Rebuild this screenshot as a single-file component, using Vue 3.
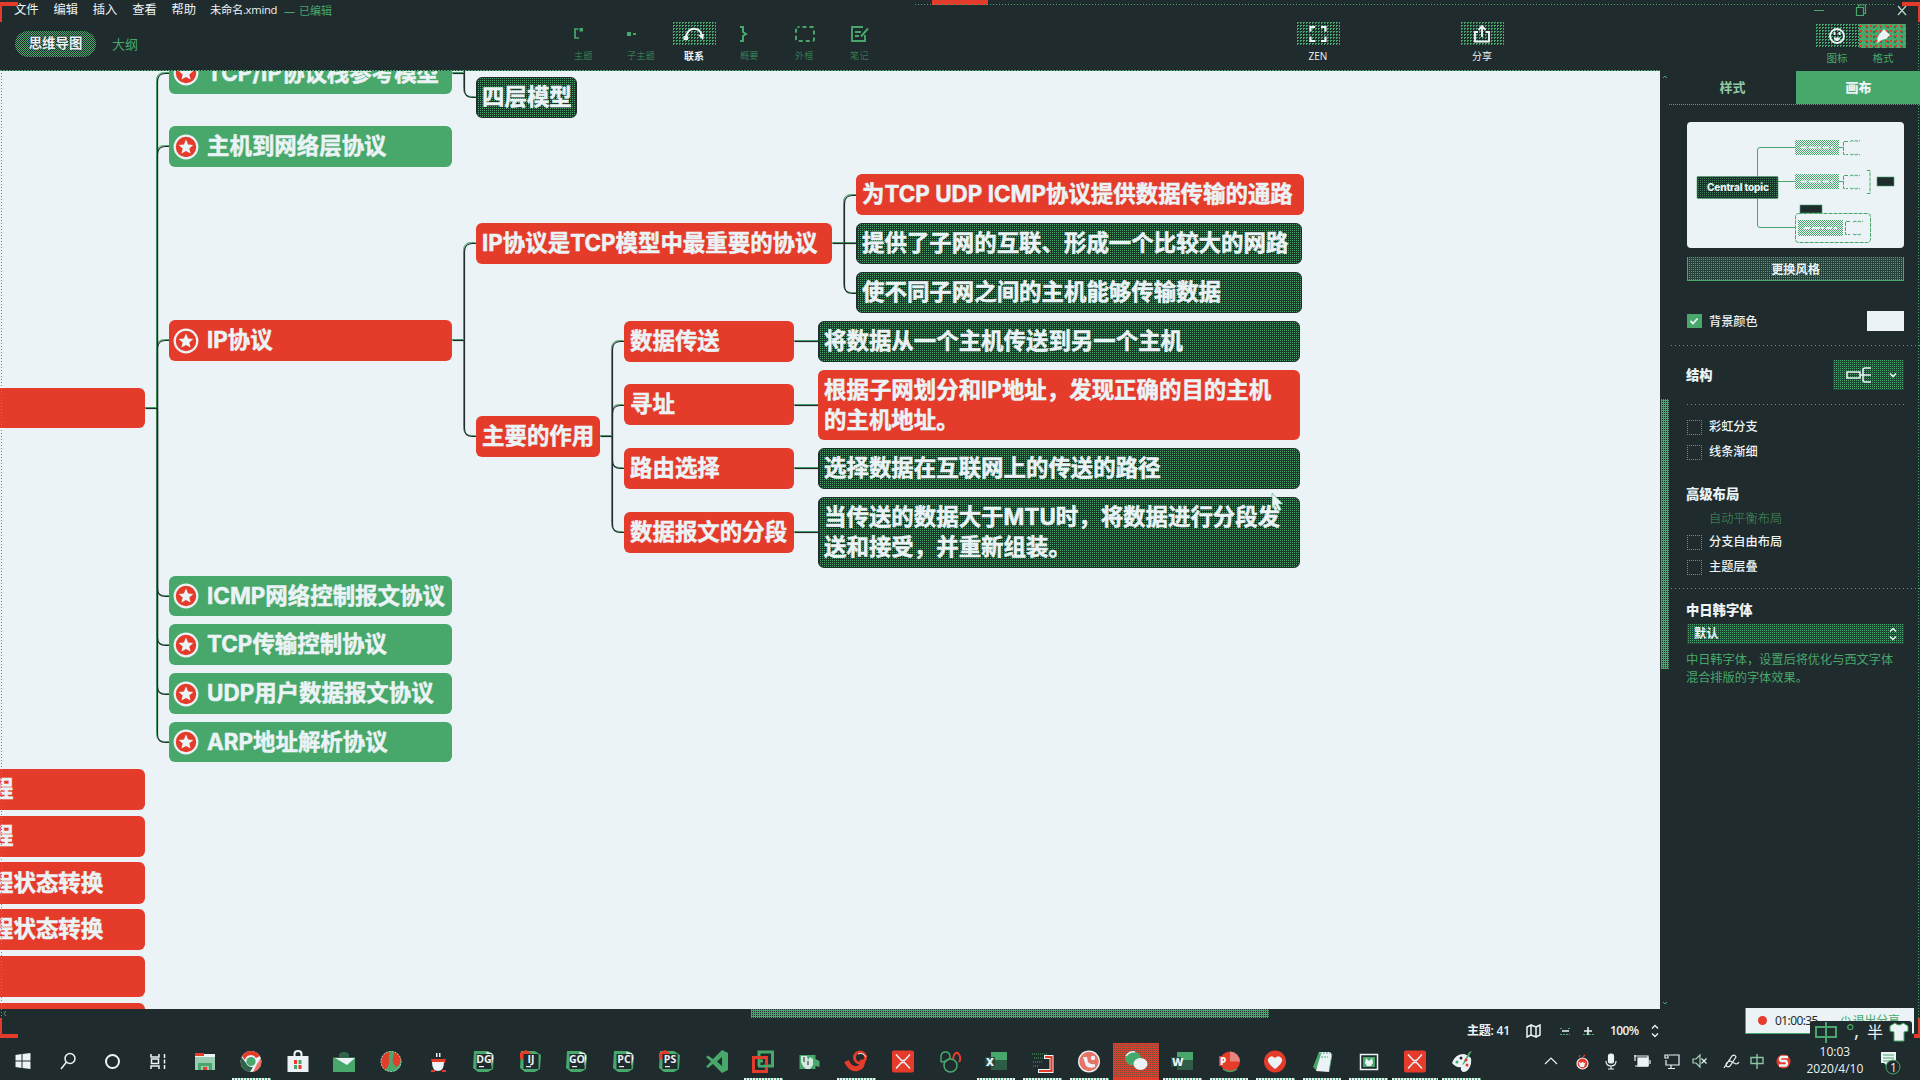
<script setup>
const menus = ['文件', '编辑', '插入', '查看', '帮助']

const nodes = [
  { t: 'TCP/IP协议栈参考模型', x: 169, y: 52, w: 283, h: 42, c: 'green', star: true },
  { t: '主机到网络层协议', x: 169, y: 126, w: 283, h: 41, c: 'green', star: true },
  { t: 'IP协议', x: 169, y: 320, w: 283, h: 41, c: 'red', star: true },
  { t: 'ICMP网络控制报文协议', x: 169, y: 576, w: 283, h: 40, c: 'green', star: true },
  { t: 'TCP传输控制协议', x: 169, y: 624, w: 283, h: 41, c: 'green', star: true },
  { t: 'UDP用户数据报文协议', x: 169, y: 673, w: 283, h: 41, c: 'green', star: true },
  { t: 'ARP地址解析协议', x: 169, y: 722, w: 283, h: 40, c: 'green', star: true },
  { t: '四层模型', x: 476, y: 77, w: 101, h: 41, c: 'dark' },
  { t: 'IP协议是TCP模型中最重要的协议', x: 476, y: 223, w: 356, h: 41, c: 'red' },
  { t: '主要的作用', x: 476, y: 416, w: 124, h: 41, c: 'red' },
  { t: '为TCP UDP ICMP协议提供数据传输的通路', x: 856, y: 174, w: 448, h: 41, c: 'red' },
  { t: '提供了子网的互联、形成一个比较大的网路', x: 856, y: 223, w: 446, h: 41, c: 'dark' },
  { t: '使不同子网之间的主机能够传输数据', x: 856, y: 272, w: 446, h: 41, c: 'dark' },
  { t: '数据传送', x: 624, y: 321, w: 170, h: 41, c: 'red' },
  { t: '寻址', x: 624, y: 384, w: 170, h: 41, c: 'red' },
  { t: '路由选择', x: 624, y: 448, w: 170, h: 41, c: 'red' },
  { t: '数据报文的分段', x: 624, y: 512, w: 170, h: 41, c: 'red' },
  { t: '将数据从一个主机传送到另一个主机', x: 818, y: 321, w: 482, h: 41, c: 'dark' },
  { t: '根据子网划分和IP地址，发现正确的目的主机\n的主机地址。', x: 818, y: 370, w: 482, h: 70, c: 'red' },
  { t: '选择数据在互联网上的传送的路径', x: 818, y: 448, w: 482, h: 41, c: 'dark' },
  { t: '当传送的数据大于MTU时，将数据进行分段发\n送和接受，并重新组装。', x: 818, y: 497, w: 482, h: 71, c: 'dark' },
  { t: '', x: -15, y: 388, w: 160, h: 40, c: 'red' },
  { t: '程', x: -15, y: 769, w: 160, h: 41, c: 'red' },
  { t: '程', x: -15, y: 816, w: 160, h: 41, c: 'red' },
  { t: '程状态转换', x: -15, y: 862, w: 160, h: 42, c: 'red' },
  { t: '程状态转换', x: -15, y: 909, w: 160, h: 41, c: 'red' },
  { t: '', x: -15, y: 956, w: 160, h: 41, c: 'red' },
  { t: '', x: -15, y: 1003, w: 160, h: 41, c: 'red' },
]

// Each entry: trunk x, child edge x, and the vertical centres of the children
const forks = [
  { from: [145, 408], x: 157, to: 170, ys: [73, 146, 340, 596, 645, 694, 742] },
  { from: [452, 73], x: 464, to: 476, ys: [60, 97] },
  { from: [452, 340], x: 464, to: 476, ys: [243, 436] },
  { from: [832, 243], x: 844, to: 857, ys: [195, 243, 293] },
  { from: [600, 436], x: 612, to: 624, ys: [341, 405, 468, 532] },
]
const links = []
for (const f of forks) {
  links.push(`M${f.from[0]} ${f.from[1]}H${f.x}`)
  for (const y of f.ys) {
    const d = y - f.from[1]
    if (Math.abs(d) < 8) links.push(`M${f.x} ${y}H${f.to}`)
    else {
      const s = Math.sign(d)
      links.push(`M${f.x} ${f.from[1]}V${y - 8 * s}Q${f.x} ${y} ${f.x + 8} ${y}H${f.to}`)
    }
  }
}
for (const y of [341, 405, 468, 532]) links.push(`M794 ${y}H819`)

const structureOptions = ['彩虹分支', '线条渐细']

const apps = [
  { k: 'win', w: 45.4 }, { k: 'search', w: 45.4 }, { k: 'cortana', w: 45.4 }, { k: 'task', w: 45.4 },
  { k: 'files' }, { k: 'chrome', run: 1 }, { k: 'store' }, { k: 'mail' }, { k: 'globe' }, { k: 'cup' },
  { k: 'jb', t: 'DG' }, { k: 'jb', t: 'IJ', hot: 1 }, { k: 'jb', t: 'GO' }, { k: 'jb', t: 'PC' }, { k: 'jb', t: 'PS', hot: 1 },
  { k: 'vs' }, { k: 'vm', run: 1 }, { k: 'cam' }, { k: 'bird', run: 1 }, { k: 'xmind' }, { k: 'rings' },
  { k: 'office', t: 'X', run: 1 }, { k: 'bracket', run: 1 }, { k: 'face', run: 1 }, { k: 'wechat', run: 2 },
  { k: 'office', t: 'W', run: 1 }, { k: 'ppt', run: 1 }, { k: 'heart', run: 1 }, { k: 'note', run: 1 },
  { k: 'photo', run: 1 }, { k: 'xmind', run: 3 }, { k: 'paint', run: 1 },
]
</script>

<template>
  <div class="screen">
    <header class="top">
      <div class="menubar">
        <span v-for="m in menus" :key="m" class="menu">{{ m }}</span>
        <span class="doc">未命名.xmind</span>
        <span class="edited"><i>—</i>已编辑</span>
        <div class="winctl">
          <svg width="96" height="14" viewBox="0 0 96 14" fill="none" stroke="#48a86b" stroke-width="1.2">
            <path d="M0 7.5h10M42.500 4.500h7v8h-7zM44.500 4v-2h7v8.500h-2" />
            <path d="M84 3l8 9M92 3l-8 9" stroke="#b9dcc8" />
          </svg>
        </div>
      </div>
      <div class="bar">
        <div class="modes">
          <span class="pill checker">思维导图</span>
          <span class="outline">大纲</span>
        </div>
        <div class="tools">
          <div class="tool" style="width: 53px">
            <div class="ic"><svg width="20" height="20" fill="none" stroke="#48a86b" stroke-width="1.700"><path d="M4.500 5H1v9h4" /><rect x="5.500" y="4" width="3.500" height="3.500" fill="#48a86b" stroke="none" /></svg></div>
            <span class="dim">主题</span>
          </div>
          <div class="tool" style="width: 45px">
            <div class="ic"><svg width="20" height="20" fill="#48a86b"><rect x="0" y="8" width="4" height="4" /><rect x="6" y="9" width="3" height="2" /></svg></div>
            <span class="dim">子主题</span>
          </div>
          <div class="tool" style="width: 68px">
            <div class="ic dots"><svg width="24" height="20" fill="none" stroke="#ebf3f6" stroke-width="2.200"><path d="M4 14C5 2 18 2 20 12" /><rect x="1.500" y="12" width="4.500" height="4" fill="#ebf3f6" stroke="none" /><path d="M16 11l5 5l1-6z" fill="#ebf3f6" stroke="none" /></svg></div>
            <span class="strong">联系</span>
          </div>
          <div class="tool" style="width: 55px">
            <div class="ic"><svg width="20" height="20" fill="none" stroke="#48a86b" stroke-width="2"><path d="M0 3h3v5l3 2l-3 2v5H0" /></svg></div>
            <span class="dim">概要</span>
          </div>
          <div class="tool" style="width: 55px">
            <div class="ic"><svg width="20" height="20" fill="none" stroke="#48a86b" stroke-width="2"><rect x="1" y="3" width="18" height="14" rx="1.500" stroke-dasharray="4 3" stroke-dashoffset="2" /></svg></div>
            <span class="dim">外框</span>
          </div>
          <div class="tool" style="width: 40px">
            <div class="ic"><svg width="20" height="20" fill="none" stroke="#48a86b" stroke-width="1.900"><path d="M13 3H2v14h13v-6M5 8h6M5 12h4M18 4.500l-7 8" /></svg></div>
            <span class="dim">笔记</span>
          </div>
        </div>
        <div class="tool zen">
          <div class="ic dots"><svg width="20" height="20" fill="none" stroke="#ebf3f6" stroke-width="2.200"><path d="M2.500 7.500V3h4.500M13 3h4.500v4.500M17.500 12.500V17H13M7 17H2.500v-4.500" /></svg></div>
          <span>ZEN</span>
        </div>
        <div class="tool share">
          <div class="ic dots"><svg width="20" height="20" fill="none" stroke="#ebf3f6" stroke-width="1.900"><path d="M6 8H3v9.500h14V8h-3M10 13V3M6.500 6L10 2.200L13.500 6" /></svg></div>
          <span>分享</span>
        </div>
        <div class="side">
          <div class="tool">
            <div class="ic dots"><svg width="20" height="20" fill="none" stroke="#ebf3f6" stroke-width="1.900"><circle cx="10" cy="10" r="7" /><path d="M6.500 11.500h7Q12.500 15 10 15T6.500 11.500z" fill="#ebf3f6" stroke="none" /><path d="M7.500 6v3M12.500 6v3" /></svg></div>
            <span class="g">图标</span>
          </div>
          <div class="tool">
            <div class="ic hot"><svg width="20" height="20" fill="#ebf3f6"><path d="M11 3l6 6l-4 4l-3 .500L7 15l-3.500 2.500L5 14l-1-1l2.500-5z" /></svg></div>
            <span class="g">格式</span>
          </div>
        </div>
      </div>
    </header>

    <main class="work">
      <section class="canvas">
        <svg class="links" width="1660" height="939" viewBox="0 70 1660 939" fill="none" stroke-width="1">
          <g stroke="#48a86b" transform="translate(-0.500 -0.500)"><path v-for="(l, i) in links" :key="i" :d="l" /></g>
          <g stroke="#1f2b2d" stroke-width="1.200" transform="translate(0.500 0.500)"><path v-for="(l, i) in links" :key="i" :d="l" /></g>
        </svg>
        <div
          v-for="(n, i) in nodes" :key="i" class="node" :class="[n.c, { starred: n.star }]"
          :style="{ left: n.x + 'px', top: n.y - 70 + 'px', width: n.w + 'px', height: n.h + 'px' }"
        >
          <svg v-if="n.star" class="star" width="26" height="26" viewBox="0 0 26 26">
            <circle cx="13" cy="13" r="11.300" fill="#e53b2a" stroke="#ebf3f6" stroke-width="2.200" />
            <path d="M13 5.600l2.100 4.900l5.200.400l-4 3.500l1.300 5.200L13 16.900l-4.600 2.700l1.300-5.200l-4-3.500l5.200-.400z" fill="#ebf3f6" />
          </svg>
          <span>{{ n.t }}</span>
        </div>
        <svg class="cursor" width="16" height="24" viewBox="0 0 16 24"><path d="M1 1v15l3.500-3l3 6l3-1.500l-3-5.500H12z" fill="#ebf3f6" stroke="#48a86b" stroke-width=".6" /></svg>
      </section>

      <div class="vscroll">
        <svg width="8" height="8" fill="none" stroke="#48a86b"><path d="M1 6l2-2l2 2" /></svg>
        <div class="vthumb"></div>
        <svg class="down" width="8" height="8" fill="none" stroke="#48a86b"><path d="M1 2l2 2l2-2" /></svg>
      </div>

      <aside class="panel">
        <div class="tabs"><span class="tab">样式</span><span class="tab on">画布</span></div>
        <div class="body">
          <svg class="preview" width="217" height="126" viewBox="1687 122 217 126">
            <defs>
              <pattern id="chk" width="2" height="2" patternUnits="userSpaceOnUse"><rect width="1" height="1" fill="#48a86b" /><rect x="1" y="1" width="1" height="1" fill="#48a86b" /></pattern>
              <pattern id="dot" width="2" height="2" patternUnits="userSpaceOnUse"><rect width="1" height="1" fill="#48a86b" /></pattern>
            </defs>
            <rect x="1687" y="122" width="217" height="126" rx="4" fill="#ebf3f6" />
            <path d="M1795 147.500h-35q-2.500 0-2.500 2.500v75q0 2.500 2.500 2.500h35M1757.500 181.500h37.500" fill="none" stroke="#48a86b" />
            <g fill="url(#chk)"><rect x="1795" y="140" width="44" height="15" /><rect x="1795" y="174" width="44" height="15" /><rect x="1798" y="220" width="45" height="16" /></g>
            <g stroke="#ebf3f6" stroke-width="2" stroke-dasharray="6 2 8 1 3 2"><path d="M1801 147.500h32M1801 181.500h32M1804 228h33" /></g>
            <g fill="none" stroke="#48a86b" stroke-dasharray="4 1">
              <path d="M1839 147.500h4M1848 141.500h-4.500v13h4.500M1839 181.500h4M1848 175.500h-4.500v13h4.500M1850 221.500h-4.500v13h4.500M1867 170.500h3v23h-3" />
              <rect x="1795.500" y="213.500" width="75" height="29" rx="3" />
              <path d="M1850 141.500l2-1l2 1l2-1l2 1l2-1M1850 154l2 1l2-1l2 1l2-1l2 1M1850 176l2-1l2 1l2-1l2 1l2-1M1850 188l2 1l2-1l2 1l2-1l2 1M1853 222l2-1l2 1l2-1l2 1l2-1M1853 234l2 1l2-1l2 1l2-1" />
            </g>
            <g fill="#1f2b2d" stroke="#48a86b" stroke-width=".6"><rect x="1697" y="176.500" width="81" height="22" rx="1" /><rect x="1800" y="205" width="22" height="8" /><rect x="1877" y="177" width="17" height="9" /></g>
            <rect x="1698" y="178" width="79" height="20" fill="url(#dot)" opacity=".7" />
            <text x="1738" y="191.200" text-anchor="middle" textLength="62" font-size="10" font-weight="800" fill="#ebf3f6" font-family="Inter, sans-serif">Central topic</text>
          </svg>
          <div class="change fill">更换风格</div>
          <div class="row bg">
            <span class="box checked"><svg width="14" height="14" fill="none" stroke="#ebf3f6" stroke-width="1.800"><path d="M3.500 7l2.500 2.500l4.500-5" /></svg></span>
            <span class="label">背景颜色</span><span class="swatch"></span>
          </div>
          <div class="rule wide"></div>
          <div class="row struct">
            <b>结构</b>
            <div class="pick fill">
              <svg width="60" height="20" fill="none" stroke="#ebf3f6" stroke-width="1.600"><path d="M2 7h13v6H2zM15 10h11M26 3h-6q-2 0-2 2v10q0 2 2 2h6" /><path d="M45 8.500l3 3l3-3" /></svg>
            </div>
          </div>
          <div class="rule"></div>
          <div class="opts first">
            <div v-for="o in structureOptions" :key="o" class="opt"><span class="box"></span>{{ o }}</div>
          </div>
          <b class="head">高级布局</b>
          <div class="opts second">
            <div class="opt off">自动平衡布局</div>
            <div class="opt"><span class="box"></span>分支自由布局</div>
            <div class="opt"><span class="box"></span>主题层叠</div>
          </div>
          <div class="rule wide"></div>
          <b class="head font">中日韩字体</b>
          <div class="select fill">默认
            <svg width="10" height="16" fill="none" stroke="#ebf3f6" stroke-width="1.500"><path d="M2 5.500l3-3l3 3M2 10.500l3 3l3-3" /></svg>
          </div>
          <p class="hint">中日韩字体，设置后将优化与西文字体<br />混合排版的字体效果。</p>
        </div>
      </aside>
    </main>

    <div class="hscroll"><svg width="14" height="9" fill="none" stroke="#48a86b"><path d="M6 2L4 4.500L6 7" /></svg><div class="hthumb"></div></div>

    <div class="status">
      <span class="count">主题: 41</span>
      <svg class="map" width="16" height="14" fill="none" stroke="#ebf3f6" stroke-width="1.500"><path d="M1 3l4-2v10l-4 2zM5 1l5 2v10l-5-2M10 3l4-2v10l-4 2" /></svg>
      <svg class="pm" width="36" height="14" fill="none"><path d="M1 4.500h3M9 4.500h3M1 10.500h10M24 10.500h11" stroke="#48a86b" stroke-dasharray="2 1" /><path d="M3 7h7M25 7h8M29 3v8" stroke="#ebf3f6" stroke-width="1.600" /></svg>
      <span class="zoom">100%</span>
      <svg width="10" height="14" fill="none" stroke="#ebf3f6" stroke-width="1.400"><path d="M2 4.500l3-3l3 3M2 9.500l3 3l3-3" /></svg>
    </div>

    <footer class="taskbar">
      <div class="apps">
        <div v-for="(a, i) in apps" :key="i" class="app" :class="{ active: a.run === 2 }" :style="{ width: (a.w || 46.55) + 'px' }">
          <svg width="24" height="24" viewBox="0 0 24 24" fill="none" stroke="#ebf3f6" stroke-width="1.500">
            <g v-if="a.k === 'win'" fill="#ebf3f6" stroke="none"><path d="M4.500 6l6-1v6.500h-6zM11.500 5l8-1v7.500h-8zM4.500 12.500h6V19l-6-1zM11.500 12.500h8V20l-8-1z" /></g>
            <g v-else-if="a.k === 'search'"><circle cx="14" cy="9.500" r="5" /><path d="M10.500 13L5 20" /></g>
            <circle v-else-if="a.k === 'cortana'" cx="11.500" cy="12.500" r="6.500" stroke-width="2" />
            <g v-else-if="a.k === 'task'"><path d="M4 5v3h8V5M4 20v-3h8v3M4.500 10h7v4.500h-7z" /><path d="M17.500 5v15" stroke-dasharray="4 1.500" /></g>
            <g v-else-if="a.k === 'files'" stroke="none"><rect x="2" y="5" width="20" height="16" fill="#ebf3f6" /><path d="M2 4h9v3H2z" fill="#e53b2a" /><path d="M2 8h20v13H2z" fill="#48a86b" opacity=".5" /><path d="M5 14h14v7h-3v-4H8v4H5z" fill="#48a86b" /><path d="M10 18h4v3h-4z" fill="#e53b2a" /></g>
            <g v-else-if="a.k === 'chrome'" stroke="none"><circle cx="12" cy="12.500" r="10.500" fill="#ebf3f6" /><path d="M3 7a10.500 10.500 0 0 1 18 0l-4 2a6 6 0 0 0-11 2z" fill="#e53b2a" /><path d="M2.500 8A10.500 10.500 0 0 0 11 23l3-5a6 6 0 0 1-7-4z" fill="#2f6249" /><path d="M22 9a10.500 10.500 0 0 1-8 14l4-8z" fill="#e53b2a" opacity=".7" /><circle cx="12" cy="12.500" r="4.600" fill="#48a86b" /></g>
            <g v-else-if="a.k === 'store'"><path d="M8.500 7V5q0-3 3.500-3t3.500 3v2" stroke-width="2" /><path d="M1.500 7h21v16h-21z" fill="#ebf3f6" stroke="none" /><path d="M8 11h3v4H8zM12.500 16h3v4h-3z" fill="#e53b2a" stroke="none" /><path d="M12.500 11h3v4h-3zM8 16h3v4H8z" fill="#48a86b" stroke="none" /></g>
            <g v-else-if="a.k === 'mail'" stroke="none"><path d="M7 8V5l3-2h4l3 2v3z" fill="#2f6249" /><path d="M1 8.500h22V23H1z" fill="#48a86b" /><path d="M3 9h20L15 16z" fill="#ebf3f6" /></g>
            <g v-else-if="a.k === 'globe'" stroke="none"><circle cx="12" cy="12.500" r="10.500" fill="#48a86b" /><path d="M11 2.500A10.500 10.500 0 0 0 6 21q5-5 4-9t1-9.500zM15 3q5 2 7 7-1 6-5 8-5-6-3-9z" fill="#e53b2a" /><circle cx="12" cy="12.500" r="10" stroke="#ebf3f6" stroke-width="1" stroke-dasharray="1 2" /></g>
            <g v-else-if="a.k === 'cup'" stroke="none"><path d="M10 4h1.500v4H10zM13 4h1.500v4H13z" fill="#ebf3f6" /><path d="M5 10h15l-1 4q-7 2-13 0z" fill="#e53b2a" /><path d="M6 13h12q0 9-6 9t-6-9z" fill="#ebf3f6" /><path d="M5 21h4v2H5zM16 21h4v2h-4z" fill="#e53b2a" /></g>
            <g v-else-if="a.k === 'jb'" stroke="none"><path d="M2 2h14l6 4-1 14-5 3H6l-5-4z" fill="#48a86b" /><path v-if="a.hot" d="M1 4l6-3 5 3-6 7-5-1z" fill="#e53b2a" /><path v-else d="M14 3l6 1 1.500 5-2 8z" fill="#ebf3f6" /><rect x="4.500" y="5" width="15" height="15" fill="#1f2b2d" /><text x="12" y="14" text-anchor="middle" font-size="10.500" font-weight="700" fill="#ebf3f6" font-family="Open Sans, sans-serif">{{ a.t }}</text><path d="M7 17h5v1.200H7z" fill="#ebf3f6" /></g>
            <g v-else-if="a.k === 'vs'" stroke="none"><path d="M17 1l6 3v17l-6 3L8 15l-5 4-2-1.500L6 12.500 1 8l2-1.500L8 10zM17 8l-5 4.500 5 4.500z" fill="#48a86b" fill-rule="evenodd" /></g>
            <g v-else-if="a.k === 'vm'" stroke-width="3"><path d="M8 12V3h13.500v14h-9M8 17v-5h4" stroke="#48a86b" /><rect x="2.500" y="8.500" width="13" height="14" stroke="#e53b2a" /><path d="M8 14.500v3h6M19 17H8" stroke="#48a86b" stroke-width="2" /></g>
            <g v-else-if="a.k === 'cam'" stroke="none"><path d="M1.500 6h16v4l4 2v6l-4-1v3h-16z" fill="#48a86b" /><path d="M3 7h6l1 4 2-3 3 2v6l-3 4H8l-3-3-2-4z" fill="#ebf3f6" opacity=".85" /><path d="M6 8v5M10 12v4" stroke="#1f2b2d" stroke-width="1" /></g>
            <g v-else-if="a.k === 'bird'"><path d="M2.500 12q4 9 11 7.500q6-2 5-9" stroke="#e53b2a" stroke-width="5" /><circle cx="16" cy="8.500" r="5.500" stroke="#e53b2a" stroke-width="3" /><path d="M14 5q5-2 8 3" stroke-width="1" /></g>
            <g v-else-if="a.k === 'xmind'"><rect x="1" y="1.500" width="22" height="22" rx="2" fill="#e53b2a" stroke="none" /><path d="M5 5.500l5.500 6h3l5.500-6M5 19.500l5.500-6h3l5.500 6" stroke-width="1.500" /></g>
            <g v-else-if="a.k === 'rings'" stroke="#48a86b"><circle cx="12.500" cy="16.500" r="6.500" /><path d="M3 13V8q0-5 4.500-5T12 8v2M3 13q5 0 9-4" /><path d="M15 10q1-7 5-6q4 5 1 9" stroke="#e53b2a" stroke-width="2" /></g>
            <g v-else-if="a.k === 'office'" stroke="none"><rect x="7" y="3" width="16" height="8" fill="#48a86b" /><path d="M7 11h16v10H7z" fill="#48a86b" opacity=".4" /><rect x="1" y="8" width="10" height="10" fill="#22493a" /><text x="2" y="17" font-size="11" font-weight="800" fill="#ebf3f6" font-family="Open Sans, sans-serif">{{ a.t }}</text></g>
            <g v-else-if="a.k === 'bracket'"><path d="M1 5h16M3 9h9M2 13h10M2 17h6" stroke="#48a86b" stroke-width="1" stroke-dasharray="1 1" /><path d="M13 8h7.500v14H7" stroke-width="4" /><path d="M14 8h6.500v14H8" stroke="#e53b2a" stroke-width="2.200" /></g>
            <g v-else-if="a.k === 'face'" stroke="none"><circle cx="12" cy="12.500" r="11" fill="#ebf3f6" /><circle cx="12" cy="12.500" r="9.700" fill="#e53b2a" opacity=".7" /><path d="M6 8h4l1 5q3 3 7 2v3q-5 2-9-1z" fill="#ebf3f6" /><circle cx="16" cy="9" r="2.200" fill="#ebf3f6" /></g>
            <g v-else-if="a.k === 'wechat'" stroke="none"><ellipse cx="9" cy="9.500" rx="8" ry="7" fill="#48a86b" /><path d="M2 7q4-5 9-4" stroke="#ebf3f6" /><ellipse cx="16.500" cy="15" rx="7" ry="6" fill="#ebf3f6" /></g>
            <g v-else-if="a.k === 'ppt'" stroke="none"><circle cx="13" cy="12.500" r="10" fill="#e53b2a" /><path d="M13 2.500a10 10 0 0 1 10 10H13z" fill="#ebf3f6" opacity=".4" /><rect x="2" y="7" width="9" height="10" fill="#e53b2a" /><text x="3" y="15.500" font-size="10" font-weight="800" fill="#ebf3f6" font-family="Open Sans, sans-serif">P</text><path d="M6 20q7 5 14 0" stroke="#48a86b" /></g>
            <g v-else-if="a.k === 'heart'" stroke="none"><circle cx="12" cy="12.500" r="11" fill="#e53b2a" /><path d="M12 20Q4 14 5 10q3-5 7-1 4-4 7 1 1 4-7 10z" fill="#ebf3f6" /></g>
            <g v-else-if="a.k === 'note'" stroke="none"><path d="M9 3h11l2 3-3 17-13-1z" fill="#ebf3f6" /><path d="M9 3L3 18l3 3L11 5z" fill="#48a86b" /><path d="M20 3l2 2-3 18M10 4h10M8 8h10" stroke="#48a86b" stroke-width="1" stroke-dasharray="2 1" /></g>
            <g v-else-if="a.k === 'photo'"><rect x="3.500" y="5.500" width="17" height="15" /><rect x="6" y="8" width="12" height="10" fill="#48a86b" stroke="none" /><path d="M9 9l3 3l3-3l1 5l-2 3h-4l-2-3z" fill="#ebf3f6" stroke="none" /></g>
            <g v-else stroke="none"><path d="M2 14Q5 5 14 5q9 2 7 10-3 9-8 8-3-2-2-5-5 1-9-4z" fill="#ebf3f6" /><path d="M19 3l3-1-8 13-2 1z" fill="#48a86b" /><circle cx="7" cy="13" r="1.500" fill="#48a86b" /><circle cx="11" cy="9" r="1.500" fill="#1f2b2d" /><circle cx="17" cy="16" r="1.500" fill="#e53b2a" /><circle cx="16" cy="11" r="1.500" fill="#e53b2a" /></g>
          </svg>
          <i v-if="a.run" class="run" :class="'r' + a.run"></i>
        </div>
      </div>
      <div class="tray">
        <svg width="256" height="20" viewBox="0 0 256 20" fill="none" stroke="#ebf3f6" stroke-width="1.200">
          <path d="M5 13l6-6l6 6" />
          <circle cx="42.500" cy="12.500" r="5.500" fill="#e53b2a" /><path d="M38.500 11h7l-1.500 5h-4z" fill="#ebf3f6" stroke="none" /><path d="M40 11.500h1.500M43.500 11.500h1.500M39 6l1-2M43 6l2-2" stroke="#e53b2a" />
          <rect x="68.500" y="3" width="5" height="9" rx="2" fill="#ebf3f6" /><path d="M66 10q0 5 5 5t5-5M71 15v3M68 18h6" />
          <rect x="98" y="7" width="10" height="8" fill="#ebf3f6" /><path d="M94 5h14v10M95 15h13M95 4v6" /><path d="M110 9v4" />
          <path d="M129 4h10v10h-13v-5M125 4h3v3h-3zM131 14v3M128 17.500h7" />
          <path d="M153 8h3l4-4v12l-4-4h-3z" stroke="#a9d4bb" /><path d="M161.500 7.500l5 5M166.500 7.500l-5 5" />
          <path d="M184 17l8-12q3-2 4 1l-6 9q-3 2-4-1q0-3 4-4l6 3q2 0 3-2" />
          <path d="M211 6.500h12v6h-12zM217 3v15" stroke="#8cc4a2" stroke-width="1.400" />
          <circle cx="243.500" cy="10.500" r="7" fill="#e53b2a" stroke="none" /><path d="M248 6h-7q-2 2 0 4h5q2 3 0 4.500h-7" stroke-width="2.400" />
        </svg>
        <div class="clock"><span>10:03</span><span>2020/4/10</span></div>
        <svg class="notice" width="26" height="26"><path d="M2 2h15v11H8v3l-3-3H2z" fill="#ebf3f6" /><path d="M4 5h11M4 8h11M4 11h7" stroke="#48a86b" /><circle cx="14" cy="17" r="7" fill="#1f2b2d" stroke="#48a86b" /><text x="11" y="21.500" font-size="12" fill="#ebf3f6" font-family="Open Sans, sans-serif">1</text></svg>
      </div>
    </footer>

    <div class="share-pill"><i></i><span class="timer">01:00:35</span><span class="exit">⏻ 退出分享</span></div>
    <div class="ime">
      <svg width="28" height="24" fill="none" stroke="#48a86b" stroke-width="2"><path d="M4 7h20v10H4zM14 2v21" /></svg>
      <span class="deg">°</span><span class="comma">,</span><span class="half">半</span>
      <svg width="20" height="22" fill="#ebf3f6"><path d="M1 5l5-3q4 4 8 0l5 3v5l-4 1v9H5v-9l-4-1z" stroke="#48a86b" /></svg>
    </div>

    <i class="corner tl"></i><i class="corner tr"></i><i class="corner bl"></i><i class="corner br"></i>
    <i class="grip"></i><i class="topline"></i><i class="leftline"></i><i class="rightline"></i>
  </div>
</template>

<style>
html, body { background: #1f2b2d; overflow: hidden; }
</style>

<style scoped>
.screen {
  --d: #1f2b2d; --g: #48a86b; --l: #ebf3f6; --r: #e53b2a;
  position: relative; width: 1920px; height: 1080px; overflow: hidden;
  display: flex; flex-direction: column;
  background: var(--d); color: var(--l);
  font-family: "Open Sans", "Noto Sans CJK SC", sans-serif; font-size: 12px; line-height: 1;
}
svg { display: block; flex: none; }
.checker { background: conic-gradient(var(--g) 25%, var(--d) 0 50%, var(--g) 0 75%, var(--d) 0) 0 0 / 2px 2px; }
.dots { background: conic-gradient(var(--g) 25%, var(--d) 0) 0 0 / 3px 3px; }
.fill { background: conic-gradient(var(--g) 25%, #24413a 0) 0 0 / 2px 2px; }

.top { height: 70px; flex: none; display: flex; flex-direction: column; }
.menubar { height: 20px; display: flex; align-items: center; padding-left: 14px; font-size: 12.300px; }
.menu { width: 39.400px; }
.doc { width: 74px; font-size: 11.300px; margin-left: -1px; white-space: nowrap; letter-spacing: -.3px; }
.edited { color: var(--g); font-size: 11px; }
.edited i { font-style: normal; margin-right: 4px; }
.winctl { margin-left: auto; margin-right: 10px; }
.bar { height: 50px; display: flex; align-items: flex-start; }
.modes { width: 559px; padding-left: 15px; padding-top: 11px; display: flex; align-items: center; box-sizing: border-box; }
.pill { width: 81px; height: 26px; border-radius: 13px; display: flex; align-items: center; justify-content: center; font-size: 13.400px; font-weight: 700; text-shadow: 0 0 1px var(--d), 0 0 2px var(--d); }
.outline { margin-left: 16px; font-size: 13px; color: var(--g); }
.tools { display: flex; padding-left: 15px; width: 737px; box-sizing: border-box; }
.tool { display: flex; flex-direction: column; font-size: 10px; padding-top: 2px; }
.tool .ic { height: 24px; display: flex; align-items: center; }
.tool .ic.dots, .tool .ic.hot { width: 44px; justify-content: center; }
.tool span { margin-top: 5px; height: 10px; white-space: nowrap; }
.tool .strong { font-weight: 700; }
.tool .ic.dots + span, .tool .ic.hot + span { width: 44px; text-align: center; }
.tool .dim { color: var(--g); font-size: 9.300px; opacity: .85; font-weight: 300; }
.tools .tool { flex: none; }
.zen { width: 164px; }
.share { width: 355px; }
.side { display: flex; padding-top: 2px; }
.side .tool .ic.hot { width: 47px; background: radial-gradient(circle at 2px 2px, var(--r) .8px, transparent 1px) 0 0 / 5px 5px, radial-gradient(circle at 1px 3px, var(--d) .6px, transparent .8px) 0 0 / 7px 5px, var(--g); }
.side .tool .ic.hot + span { width: 48px; }
.tool .g { color: var(--g); font-size: 10.500px; }

.work { height: 939px; flex: none; display: flex; }
.canvas { position: relative; width: 1660px; flex: none; background: var(--l); overflow: hidden; }
.canvas::before { content: ""; position: absolute; inset: 0 0 auto; height: 1px; background: repeating-linear-gradient(90deg, var(--g) 0 2px, var(--d) 2px 3px); z-index: 2; }
.links { position: absolute; left: 0; top: 0; }
.node {
  position: absolute; box-sizing: border-box; border-radius: 6px; display: flex; align-items: center; padding-left: 6px;
  font: 700 22.450px/30px Inter, "Noto Sans CJK SC", sans-serif; color: var(--l); white-space: pre;
}
.node span { -webkit-text-stroke: .5px var(--l); margin-top: -1px; }
.node.green { background: var(--g); }
.node.red { background: var(--r); }
.node.dark { background: conic-gradient(var(--g) 25%, #22332f 0) 0 0 / 2px 2px; border: 1px solid var(--d); padding-left: 5px; }
.node.starred { padding-left: 4px; gap: 8px; }
.cursor { position: absolute; left: 1271px; top: 422px; }

.vscroll { width: 9px; display: flex; flex-direction: column; padding: 2px 0 1px; box-sizing: border-box; }
.vscroll svg { margin-left: 2px; }
.vthumb { margin: 319px 0 0 1px; width: 8px; height: 270px; background: conic-gradient(var(--d) 25%, var(--g) 0) 0 0 / 2px 2px; }
.down { margin-top: auto; }

.panel { width: 251px; display: flex; flex-direction: column; }
.tabs { display: flex; height: 34px; border-top: 1px solid transparent; box-sizing: border-box; margin-left: -9px; }
.tab { width: 136px; height: 33px; display: flex; align-items: center; justify-content: center; font-size: 13px; font-weight: 600; color: #8fc9a6; padding-left: 9px; box-sizing: border-box; }
.tab.on { width: 124px; background: var(--g); color: var(--l); font-weight: 800; padding: 0 0 0 1px; }
.body { padding: 0 16px 0 18px; border-top: 1px dotted var(--g); display: flex; flex-direction: column; }
.preview { margin-top: 17px; }
.change { margin-top: 9px; height: 24px; box-sizing: border-box; border: 1px solid var(--g); border-top: 0; display: flex; align-items: center; justify-content: center; padding-top: 3px; font-size: 12.200px; font-weight: 600; }
.row { display: flex; align-items: center; }
.bg { margin-top: 30px; height: 20px; gap: 7px; font-size: 12.200px; font-weight: 500; }
.label { padding-top: 2px; }
.swatch { margin-left: auto; width: 37px; height: 20px; background: var(--l); }
.box { width: 15px; height: 15px; box-sizing: border-box; border: 1px dotted var(--g); flex: none; }
.box.checked { background: var(--g); border: 0; height: 14px; }
.rule { height: 1px; flex: none; background: repeating-linear-gradient(90deg, var(--g) 0 1px, transparent 1px 4px); }
.rule.wide { margin: 14px -16px 0 -16px; }
.struct { margin-top: 14px; height: 30px; justify-content: space-between; }
.struct b { padding-top: 2px; }
b { font-size: 13.300px; font-weight: 800; margin-left: -1px; }
.pick { width: 71px; height: 30px; display: flex; align-items: center; justify-content: flex-end; }
.pick svg { margin-right: -1px; }
.struct + .rule { margin-top: 14px; }
.opts { display: flex; flex-direction: column; font-size: 12.200px; font-weight: 500; }
.opt { height: 25px; display: flex; align-items: center; gap: 7px; }
.first { margin-top: 10px; }
.head { margin-top: 23px; height: 14px; }
.second { margin-top: 5px; }
.opt.off { height: 24px; padding-left: 22px; color: var(--g); opacity: .85; font-weight: 300; }
.second .opt + .opt { position: relative; top: -1px; }
.second + .rule.wide { margin-top: 7px; }
.head.font { margin-top: 15px; }
.select { margin-top: 6px; height: 20px; padding: 0 6px 0 7px; display: flex; align-items: center; justify-content: space-between; font-size: 12.200px; font-weight: 600; }
.hint { margin: 7px -8px 0 -1px; color: var(--g); font-size: 12.200px; line-height: 18px; white-space: nowrap; }

.hscroll { height: 9px; flex: none; display: flex; }
.hthumb { margin-left: 737px; width: 518px; height: 9px; background: conic-gradient(var(--d) 25%, var(--g) 0) 0 0 / 2px 2px; }
.status { height: 25px; flex: none; display: flex; align-items: center; padding-left: 1467px; font: 600 12px/1 "Open Sans", "Noto Sans CJK SC", sans-serif; }
.count { width: 59px; letter-spacing: -.2px; }
.map { width: 33px; }
.pm { width: 51px; }
.zoom { width: 40px; letter-spacing: -.6px; }

.taskbar { height: 37px; flex: none; display: flex; }
.apps { display: flex; }
.app { position: relative; height: 37px; display: flex; justify-content: center; padding-top: 6px; box-sizing: border-box; }
.app.active { background: conic-gradient(var(--r) 25%, #7c4a35 0 50%, var(--r) 0 75%, #7c6a45 0) 0 0 / 2px 2px; }
.run { position: absolute; bottom: 0; left: 4px; right: 4px; height: 2px; background: repeating-linear-gradient(90deg, var(--l) 0 2px, var(--g) 2px 3px); }
.run.r2 { left: 0; right: 0; height: 3px; background: var(--r); }
.run.r3 { left: 0; right: 0; }
.tray { display: flex; margin-left: 55px; padding-top: 8px; }
.clock { width: 72px; margin-left: 3px; display: flex; flex-direction: column; align-items: center; gap: 5px; font-size: 12px; margin-top: -5px; }
.notice { margin: -1px 0 0 8px; }

.share-pill { position: absolute; left: 1745px; top: 1008px; width: 169px; height: 26px; background: var(--l); border-bottom: 1px solid var(--g); border-left: 1px solid var(--g); box-sizing: border-box; display: flex; align-items: center; padding-left: 12px; color: var(--d); font-size: 12px; white-space: nowrap; }
.share-pill i { width: 9px; height: 9px; border-radius: 50%; background: var(--r); margin-right: 8px; }
.timer { width: 66px; font-family: "Noto Sans", sans-serif; letter-spacing: -.6px; }
.exit { color: var(--g); letter-spacing: -.2px; }
.ime { position: absolute; left: 1810px; top: 1021px; width: 102px; height: 22px; background: var(--d); border-radius: 3px; display: flex; align-items: center; padding-left: 2px; box-sizing: border-box; }
.deg { font-size: 20px; color: var(--g); width: 14px; padding-left: 6px; box-sizing: border-box; }
.comma { font-size: 20px; width: 13px; margin-top: -4px; }
.half { font-size: 16px; width: 22px; }

.corner { position: absolute; width: 18px; height: 20px; box-sizing: border-box; border: 0 solid var(--r); }
.tl { left: 0; top: 2px; border-width: 4px 0 0 2px; }
.tr { right: 0; top: 2px; border-width: 4px 2px 0 0; }
.bl { left: 0; top: 1018px; border-width: 0 0 4px 2px; }
.br { right: 0; top: 1018px; width: 6px; border-width: 0 2px 4px 0; }
.grip { position: absolute; left: 932px; top: 0; width: 56px; height: 5px; background: var(--r); }
.topline { position: absolute; left: 915px; top: 4px; width: 980px; height: 1px; background: repeating-linear-gradient(90deg, var(--g) 0 1px, transparent 1px 3px); z-index: 0; }
.leftline { position: absolute; left: 1px; top: 70px; width: 1px; height: 948px; background: repeating-linear-gradient(180deg, var(--g) 0 1px, transparent 1px 3px); }
.rightline { position: absolute; right: 1px; top: 24px; width: 1px; height: 994px; background: repeating-linear-gradient(180deg, var(--g) 0 1px, transparent 1px 3px); }
</style>
